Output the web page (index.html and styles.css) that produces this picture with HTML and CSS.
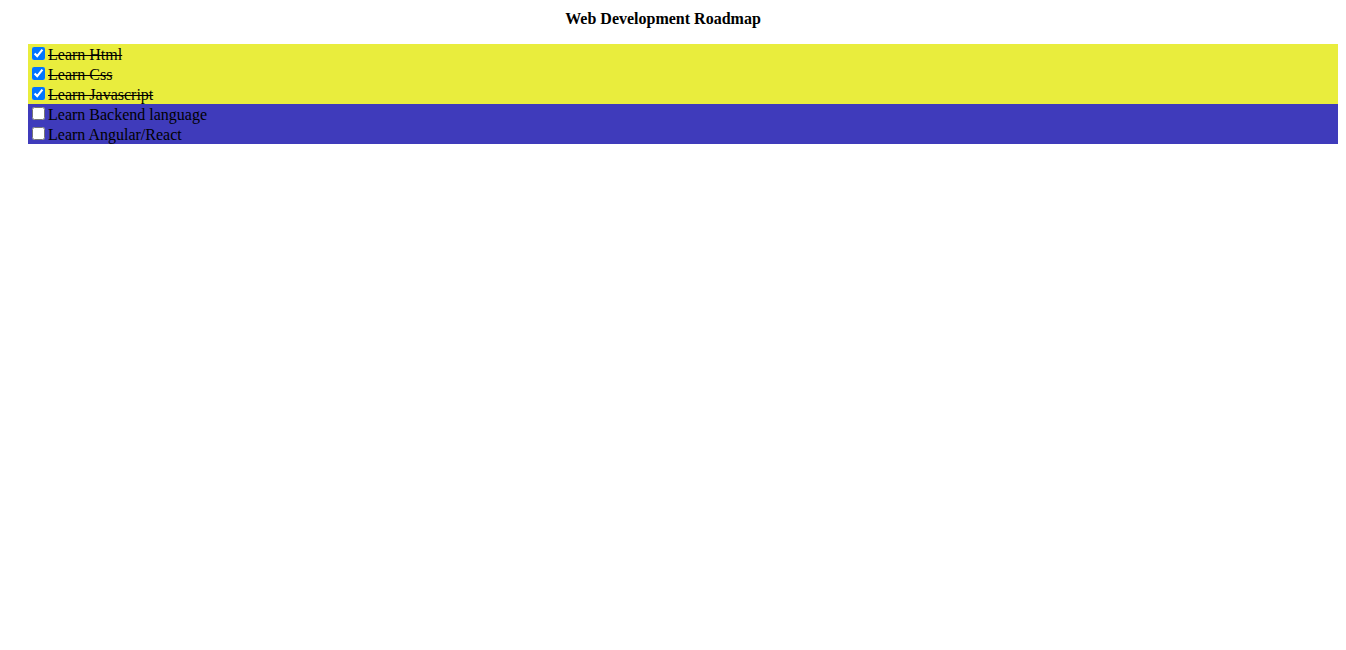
FILE: index.html
```html
<!DOCTYPE html>
<html>
<head>
<meta charset="utf-8">
<link rel="stylesheet" href="styles.css">
</head>
<body>
<div class="app">
  <h4 class="title">Web Development Roadmap</h4>
  <div class="list">
    <div class="item done"><input type="checkbox" checked><span class="text">Learn Html</span></div>
    <div class="item done"><input type="checkbox" checked><span class="text">Learn Css</span></div>
    <div class="item done"><input type="checkbox" checked><span class="text">Learn Javascript</span></div>
    <div class="item todo"><input type="checkbox"><span class="text">Learn Backend language</span></div>
    <div class="item todo"><input type="checkbox"><span class="text">Learn Angular/React</span></div>
  </div>
</div>
</body>
</html>
```
FILE: styles.css
```css
html, body {
  margin: 0;
  padding: 0;
  background: #ffffff;
}
body {
  font-family: "Liberation Serif", "Times New Roman", serif;
  font-size: 16px;
  color: #000;
}
.app {
  padding: 10px 8px 0;
}
.title {
  margin: 0 20px 16px 0;
  font-size: 16px;
  line-height: 18px;
  font-weight: bold;
  text-align: center;
}
.list {
  margin: 0 0 0 20px;
}
.item {
  height: 20px;
  line-height: 20px;
}
.item input {
  margin: 3px 3px 3px 4px;
}
.done {
  background: #e9ed3d;
}
.done .text {
  text-decoration: line-through;
}
.todo {
  background: #3f3bbb;
}
```
